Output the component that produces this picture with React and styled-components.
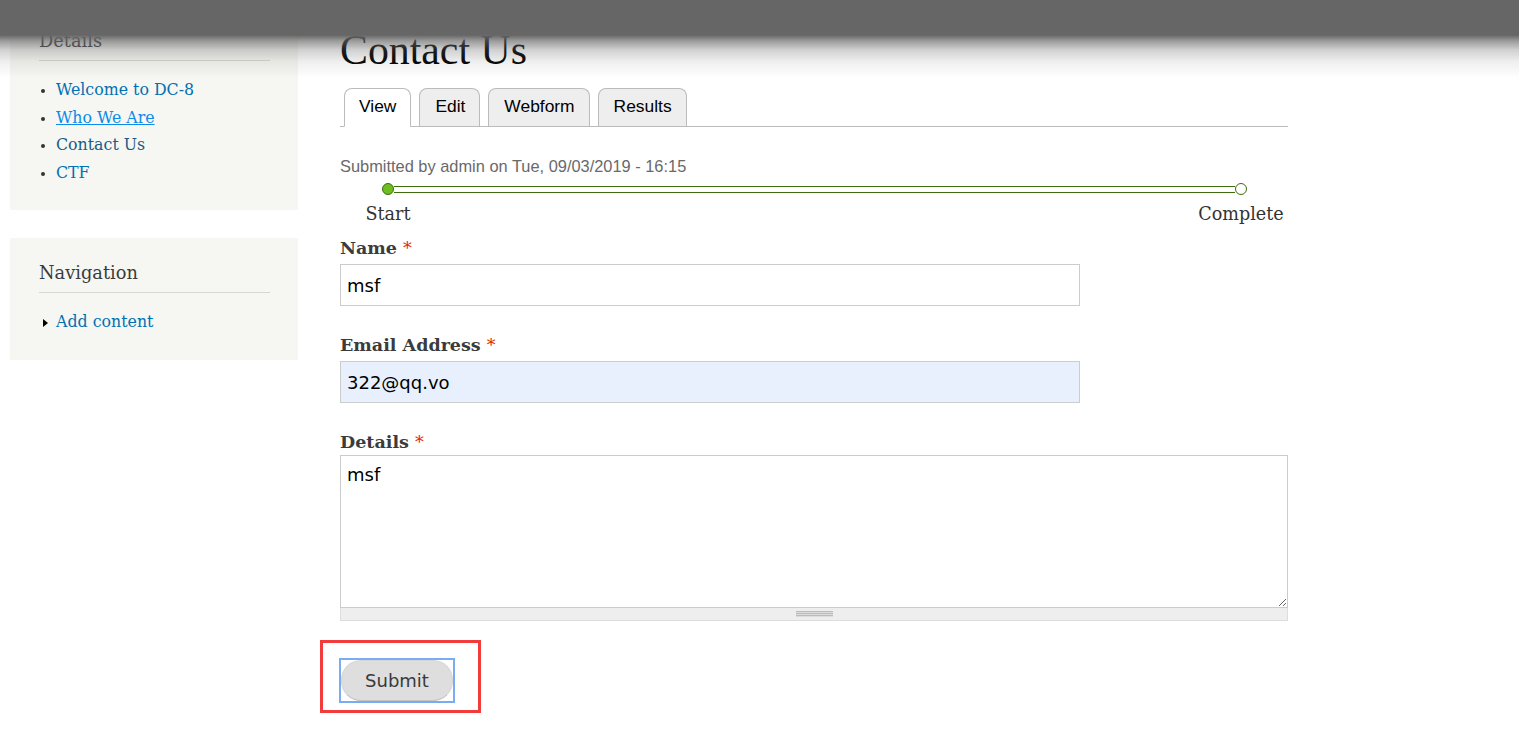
import React from 'react';
import styled, { createGlobalStyle } from 'styled-components';

const GlobalStyle = createGlobalStyle`
    html, body {
        margin: 0;
        padding: 0;
        background: #fff;
        color: #3b3b3b;
        font-family: "DejaVu Serif", Georgia, serif;
    }
`;

function App() {
    return (
        <>
            <GlobalStyle />
            <TopShade />
            <Page>
                <Sidebar>
                    <Block $first>
                        <BlockTitle>Details</BlockTitle>
                        <MenuList>
                            <MenuItem><MenuLink href="#">Welcome to DC-8</MenuLink></MenuItem>
                            <MenuItem><MenuLink href="#" $hover>Who We Are</MenuLink></MenuItem>
                            <MenuItem><MenuLink href="#" $active>Contact Us</MenuLink></MenuItem>
                            <MenuItem><MenuLink href="#">CTF</MenuLink></MenuItem>
                        </MenuList>
                    </Block>
                    <Block>
                        <BlockTitle>Navigation</BlockTitle>
                        <MenuList $collapsed>
                            <MenuItem $collapsed>
                                <Arrow />
                                <MenuLink href="#">Add content</MenuLink>
                            </MenuItem>
                        </MenuList>
                    </Block>
                </Sidebar>

                <Main>
                    <Title>Contact Us</Title>
                    <Tabs>
                        <Tab $active>View</Tab>
                        <Tab>Edit</Tab>
                        <Tab>Webform</Tab>
                        <Tab>Results</Tab>
                    </Tabs>

                    <Submitted>Submitted by admin on Tue, 09/03/2019 - 16:15</Submitted>

                    <Tracker>
                        <Step>
                            <Dot $done />
                            <StepLabel>Start</StepLabel>
                        </Step>
                        <Bar />
                        <Step>
                            <Dot />
                            <StepLabel>Complete</StepLabel>
                        </Step>
                    </Tracker>

                    <Field>
                        <Label>Name <Req>*</Req></Label>
                        <TextInput defaultValue="msf" />
                    </Field>
                    <Field>
                        <Label>Email Address <Req>*</Req></Label>
                        <TextInput defaultValue="322@qq.vo" $autofill />
                    </Field>
                    <Field>
                        <Label $tight>Details <Req>*</Req></Label>
                        <TextArea defaultValue="msf" />
                        <Grippie />
                    </Field>

                    <Marked>
                        <FocusRing>
                            <SubmitButton>Submit</SubmitButton>
                        </FocusRing>
                    </Marked>
                </Main>
            </Page>
        </>
    )
}

export default App

const TopShade = styled.div`
    position: fixed;
    top: 0;
    left: 0;
    right: 0;
    height: 80px;
    z-index: 10;
    pointer-events: none;
    background: linear-gradient(
        to bottom,
        #666 0,
        #666 35px,
        rgba(102, 102, 102, 0.65) 41px,
        rgba(102, 102, 102, 0.3) 50px,
        rgba(102, 102, 102, 0.1) 62px,
        rgba(102, 102, 102, 0) 78px
    );
`;
const Page = styled.div`
    display: flex;
    align-items: flex-start;
    gap: 42px;
    padding-left: 10px;
    min-height: 732px;
    box-sizing: border-box;
`;
const Sidebar = styled.aside`
    width: 288px;
    flex: none;
    display: flex;
    flex-direction: column;
    gap: 28px;
`;
const Block = styled.section`
    background: #f6f6f2;
    padding: 23px 28px 24px 29px;
    margin-top: ${p => p.$first ? '6px' : '0'};
`;
const BlockTitle = styled.h2`
    margin: 0;
    padding-bottom: 7px;
    border-bottom: 1px solid #d6d6d2;
    font-size: 17.8px;
    line-height: 24px;
    font-weight: normal;
    color: #3b3b3b;
`;
const MenuList = styled.ul`
    margin: 15px 0 0;
    padding-left: ${p => p.$collapsed ? '4px' : '17px'};
    list-style: ${p => p.$collapsed ? 'none' : 'disc'};
    color: #333;
`;
const MenuItem = styled.li`
    font-size: 15.8px;
    line-height: 27.6px;
    display: ${p => p.$collapsed ? 'flex' : 'list-item'};
    align-items: center;
    gap: 8px;
    &::marker {
        font-size: 13px;
    }
`;
const Arrow = styled.span`
    width: 0;
    height: 0;
    border-top: 4px solid transparent;
    border-bottom: 4px solid transparent;
    border-left: 5px solid #000;
    margin-top: 2px;
`;
const MenuLink = styled.a`
    color: ${p => p.$active ? '#1a5c86' : p.$hover ? '#0a8ce8' : '#0071b3'};
    text-decoration: ${p => p.$hover ? 'underline' : 'none'};
`;
const Main = styled.main`
    width: 948px;
    flex: none;
    padding-top: 26px;
`;
const Title = styled.h1`
    margin: 0;
    font-family: "Liberation Serif", Georgia, serif;
    font-weight: normal;
    font-size: 41.8px;
    line-height: 49px;
    color: #000;
`;
const Tabs = styled.ul`
    display: flex;
    gap: 8px;
    margin: 13px 0 0;
    padding: 0 0 0 4px;
    list-style: none;
    border-bottom: 1px solid #bbb;
    height: 38px;
`;
const Tab = styled.li`
    box-sizing: border-box;
    height: ${p => p.$active ? '39px' : '38px'};
    padding: 0 14px 0 ${p => p.$active ? '14px' : '15px'};
    border: 1px solid #bbb;
    border-bottom: ${p => p.$active ? '1px solid #fff' : 'none'};
    border-radius: 8px 8px 0 0;
    background: ${p => p.$active ? '#fff' : '#eee'};
    font-family: "Liberation Sans", Arial, sans-serif;
    font-size: 17.4px;
    line-height: 34px;
    color: #000;
`;
const Submitted = styled.p`
    margin: 30px 0 0;
    font-family: "Liberation Sans", Arial, sans-serif;
    font-size: 16.4px;
    line-height: 18px;
    color: #68696b;
`;
const Tracker = styled.div`
    display: flex;
    align-items: flex-start;
    margin-top: 8px;
    padding: 0 41px 0 42px;
`;
const Step = styled.div`
    width: 12px;
    flex: none;
    display: flex;
    flex-direction: column;
    align-items: center;
`;
const Dot = styled.span`
    box-sizing: border-box;
    width: 12px;
    height: 12px;
    border-radius: 50%;
    border: 1px solid #3d6b0d;
    background: ${p => p.$done ? '#6ebe1f' : '#fff'};
`;
const Bar = styled.div`
    flex: 1;
    height: 7px;
    margin-top: 3px;
    box-sizing: border-box;
    border-top: 1px solid #3d6b0d;
    border-bottom: 1px solid #3d6b0d;
    background: #fff;
`;
const StepLabel = styled.span`
    margin-top: 8px;
    white-space: nowrap;
    font-size: 17.6px;
    line-height: 22px;
    color: #333;
`;
const Field = styled.div`
    margin-top: 13px;
    & + & {
        margin-top: 29px;
    }
`;
const Label = styled.label`
    display: block;
    font-weight: bold;
    font-size: 17.5px;
    line-height: 20px;
    color: #3b3b3b;
    margin-bottom: ${p => p.$tight ? '3px' : '6px'};
`;
const Req = styled.span`
    color: #e62600;
    font-weight: normal;
`;
const TextInput = styled.input`
    display: block;
    box-sizing: border-box;
    width: 740px;
    height: 42px;
    margin: 0;
    padding: 0 6px;
    border: 1px solid #ccc;
    border-radius: 0;
    background: ${p => p.$autofill ? '#e8f0fe' : '#fff'};
    font-family: "DejaVu Sans", Verdana, sans-serif;
    font-size: 18px;
    color: #000;
    outline: none;
`;
const TextArea = styled.textarea`
    display: block;
    box-sizing: border-box;
    width: 948px;
    height: 153px;
    margin: 0;
    padding: 6px 6px;
    border: 1px solid #ccc;
    border-radius: 0;
    resize: vertical;
    font-family: "DejaVu Sans", Verdana, sans-serif;
    font-size: 18px;
    line-height: 26px;
    color: #000;
    outline: none;
`;
const Grippie = styled.div`
    box-sizing: border-box;
    height: 13px;
    border: 1px solid #ddd;
    border-top: none;
    background: #eee;
    display: flex;
    justify-content: center;
    align-items: center;
    &::after {
        content: "";
        width: 37px;
        height: 6px;
        background: repeating-linear-gradient(
            to bottom,
            #bbb 0,
            #bbb 1px,
            #ddd 1px,
            #ddd 2px
        );
    }
`;
const Marked = styled.div`
    display: inline-block;
    margin: 19px 0 0 -20px;
    border: 3px solid #f23b3b;
    padding: 15px 23px 7px 16px;
`;
const FocusRing = styled.span`
    display: block;
    border: 2px solid #7aabf5;
`;
const SubmitButton = styled.button`
    display: block;
    box-sizing: border-box;
    width: 112px;
    height: 41px;
    margin: 0;
    padding: 0;
    border: 1px solid #d6d6d6;
    border-bottom-color: #c4c4c4;
    border-radius: 20px;
    background: #dedede;
    font-family: "DejaVu Sans", Verdana, sans-serif;
    font-size: 18px;
    color: #3a3a3a;
    outline: none;
`;
